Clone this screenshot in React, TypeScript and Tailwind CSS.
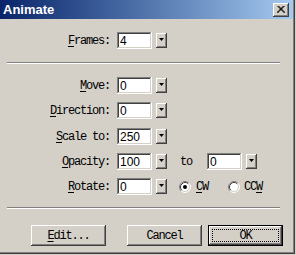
import React from "react";

const raised =
  "shadow-[inset_-1px_-1px_#404040,inset_1px_1px_#ffffff,inset_-2px_-2px_#808080,inset_2px_2px_#d4d0c8] bg-[#d4d0c8]";
const sunken =
  "shadow-[inset_-1px_-1px_#ffffff,inset_1px_1px_#808080,inset_-2px_-2px_#d4d0c8,inset_2px_2px_#404040] bg-white";
const mono = "font-['Liberation_Mono',monospace] text-[12px] tracking-[-1.2px] text-black leading-none";

function U({ children }: { children: React.ReactNode }) {
  return <span className="underline underline-offset-[2px]">{children}</span>;
}

function Field({ value }: { value: string }) {
  return (
    <div
      className={`${sunken} w-[35px] h-[17px] flex items-center pl-[3px] font-['Liberation_Sans',sans-serif] text-[12px] leading-none text-black`}
    >
      {value}
    </div>
  );
}

function Drop() {
  return (
    <div className={`${raised} w-[11px] h-[15px] flex justify-center pt-[5px]`}>
      <svg width="5" height="3" viewBox="0 0 5 3">
        <polygon points="0,0 5,0 2.5,3" fill="#000" />
      </svg>
    </div>
  );
}

function Combo({ value }: { value: string }) {
  return (
    <div className="flex items-start gap-[4px]">
      <Field value={value} />
      <div className="mt-[1px]">
        <Drop />
      </div>
    </div>
  );
}

function Row({ label, children }: { label: React.ReactNode; children: React.ReactNode }) {
  return (
    <div className="flex items-center h-[17px]">
      <div className={`${mono} w-[110px] text-right`}>{label}</div>
      <div className="ml-[7px] flex items-center">{children}</div>
    </div>
  );
}

function Radio({ checked }: { checked?: boolean }) {
  return (
    <svg width="12" height="12" viewBox="0 0 12 12">
      <circle cx="6" cy="6" r="5" fill="#fff" />
      <path d="M 2.11 9.89 A 5.5 5.5 0 0 1 9.89 2.11" stroke="#808080" strokeWidth="1" fill="none" />
      <path d="M 9.89 2.11 A 5.5 5.5 0 0 1 2.11 9.89" stroke="#ffffff" strokeWidth="1" fill="none" />
      <path d="M 2.82 9.18 A 4.5 4.5 0 0 1 9.18 2.82" stroke="#404040" strokeWidth="1" fill="none" />
      <path d="M 9.18 2.82 A 4.5 4.5 0 0 1 2.82 9.18" stroke="#d4d0c8" strokeWidth="1" fill="none" />
      {checked && <circle cx="6" cy="6" r="2" fill="#000" />}
    </svg>
  );
}

function Sep() {
  return <div className="ml-[7px] w-[273px] h-[2px] border-t border-t-[#808080] border-b border-b-white" />;
}

function Button({ children, def }: { children: React.ReactNode; def?: boolean }) {
  if (def) {
    return (
      <div className="w-[75px] h-[21px] border border-black bg-[#d4d0c8]">
        <div className={`${raised} w-full h-full p-[3px]`}>
          <div className={`w-full h-full border border-dotted border-black flex items-center justify-center ${mono}`}>
            {children}
          </div>
        </div>
      </div>
    );
  }
  return (
    <div className={`${raised} w-[75px] h-[21px] flex items-center justify-center ${mono}`}>{children}</div>
  );
}

export default function App() {
  return (
    <div className="w-[296px] h-[255px] bg-[#d4d0c8] overflow-hidden">
      <div className="w-[295px] h-[254px] bg-[#d4d0c8] shadow-[inset_-1px_-1px_#404040,inset_-2px_-2px_#808080] flex flex-col">
        <div className="w-[293px] h-[19px] bg-linear-to-r from-[#0a246a] to-[#a6caf0] flex items-center justify-between pl-[3px] pr-[4px]">
          <span className="font-['Liberation_Sans',sans-serif] font-bold text-[13px] text-white leading-none">
            Animate
          </span>
          <div className={`${raised} w-[16px] h-[14px] flex items-center justify-center`}>
            <svg width="8" height="7" viewBox="0 0 8 7">
              <path d="M0.5 0 L7.5 7 M1.5 0 L8.5 7 M7.5 0 L0.5 7 M6.5 0 L-0.5 7" stroke="#000" strokeWidth="1" />
            </svg>
          </div>
        </div>

        <div className="mt-[13px]">
          <Row label={<><U>F</U>rames:</>}>
            <Combo value="4" />
          </Row>
        </div>

        <div className="mt-[13px]">
          <Sep />
        </div>

        <div className="mt-[13px] flex flex-col">
          <Row label={<><U>M</U>ove:</>}>
            <Combo value="0" />
          </Row>
          <div className="mt-[8px]">
            <Row label={<><U>D</U>irection:</>}>
              <Combo value="0" />
            </Row>
          </div>
          <div className="mt-[9px]">
            <Row label={<><U>S</U>cale to:</>}>
              <Combo value="250" />
            </Row>
          </div>
          <div className="mt-[8px]">
            <Row label={<><U>O</U>pacity:</>}>
              <Combo value="100" />
              <span className={`${mono} ml-[13px] w-[27px]`}>to</span>
              <Combo value="0" />
            </Row>
          </div>
          <div className="mt-[8px]">
            <Row label={<><U>R</U>otate:</>}>
              <Combo value="0" />
              <div className="ml-[12px] flex items-center">
                <Radio checked />
                <span className={`${mono} ml-[5px]`}>
                  <U>C</U>W
                </span>
              </div>
              <div className="ml-[20px] flex items-center">
                <Radio />
                <span className={`${mono} ml-[4px]`}>
                  CC<U>W</U>
                </span>
              </div>
            </Row>
          </div>
        </div>

        <div className="mt-[12px]">
          <Sep />
        </div>

        <div className="mt-[16px] flex pl-[31px]">
          <Button>
            <U>E</U>dit...
          </Button>
          <div className="ml-[21px]">
            <Button>Cancel</Button>
          </div>
          <div className="ml-[6px]">
            <Button def>OK</Button>
          </div>
        </div>
      </div>
    </div>
  );
}
